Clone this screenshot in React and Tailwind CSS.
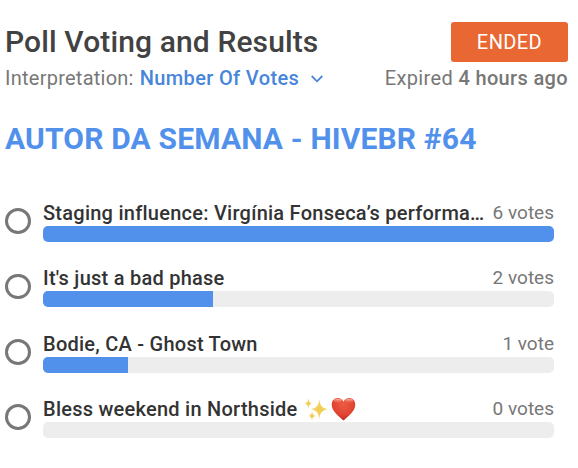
const options = [
  { label: "Staging influence: Virgínia Fonseca’s performa…", votes: "6 votes", percent: 100 },
  { label: "It's just a bad phase", votes: "2 votes", percent: 33.33 },
  { label: "Bodie, CA - Ghost Town", votes: "1 vote", percent: 16.67 },
  { label: "Bless weekend in Northside", votes: "0 votes", percent: 0, emoji: true },
];

function Sparkles() {
  return (
    <svg width="24" height="24" viewBox="0 0 24 24" className="block">
      <defs>
        <radialGradient id="spark">
          <stop offset="0" stopColor="#f0cb4a" />
          <stop offset="1" stopColor="#f5da80" />
        </radialGradient>
      </defs>
      <g fill="url(#spark)">
        <path d="M15.3 1.6C16 8.6 17.6 10.8 23.8 12.3C17.6 13.8 16 16 15.3 22.8C14.6 16 13 13.8 7 12.3C13 10.8 14.6 8.6 15.3 1.6Z" />
        <path d="M4.4 .8C4.8 4.6 5.5 5.8 8.2 6.6C5.5 7.4 4.8 8.6 4.4 12C4 8.6 3.3 7.4.6 6.6C3.3 5.8 4 4.6 4.4.8Z" />
        <path d="M8 14C8.4 17.1 9.1 18.1 11.6 18.9C9.1 19.7 8.4 20.7 8 24C7.6 20.7 6.9 19.7 4.5 18.9C6.9 18.1 7.6 17.1 8 14Z" />
      </g>
    </svg>
  );
}

function Heart() {
  return (
    <svg width="25" height="24" viewBox="0 0 26 24" preserveAspectRatio="none" className="block">
      <defs>
        <radialGradient id="heart" cx=".5" cy=".3" r=".7">
          <stop offset="0" stopColor="#ef5b43" />
          <stop offset=".65" stopColor="#e04431" />
          <stop offset="1" stopColor="#b92c20" />
        </radialGradient>
        <linearGradient id="shine" x2="0" y2="1">
          <stop offset="0" stopColor="#ffd0c4" stopOpacity=".8" />
          <stop offset="1" stopColor="#ff8b74" stopOpacity="0" />
        </linearGradient>
      </defs>
      <path fill="url(#heart)" d="M13 4.8C11.7 2.2 9.5 1 7 1C3.4 1 .8 3.8.8 7.7C.8 14.5 8.4 19.2 13 23.6C17.6 19.2 25.2 14.5 25.2 7.7C25.2 3.8 22.6 1 19 1C16.5 1 14.3 2.2 13 4.8Z" />
      <ellipse cx="7" cy="4" rx="4" ry="2.2" fill="url(#shine)" />
      <ellipse cx="19" cy="4" rx="4" ry="2.2" fill="url(#shine)" />
    </svg>
  );
}

function Option({ label, votes, percent, emoji }) {
  return (
    <li className="flex h-[42px] items-center gap-[12.5px]">
      <span className="size-[25.5px] shrink-0 rounded-full border-3 border-[#777777]" />
      <div className="w-[511px]">
        <div className="flex h-[26px] justify-between whitespace-nowrap leading-[26px]">
          <span className="flex items-center font-medium tracking-[0.25px] text-[#333333]">
            {label}
            {emoji && (
              <span className="ml-1.5 flex gap-[3px]">
                <Sparkles />
                <Heart />
              </span>
            )}
          </span>
          <span className="text-[19px] text-[#777777]">{votes}</span>
        </div>
        <div className="h-4 overflow-hidden rounded-[5px] bg-[#ededed]">
          <div className="h-full bg-[#5191ec]" style={{ width: `${percent}%` }} />
        </div>
      </div>
    </li>
  );
}

export default function App() {
  return (
    <main className="h-[468px] w-[578px] overflow-hidden bg-white pl-[5px] pr-[10px] pt-[22px] font-['Roboto',sans-serif] text-[20px]">
      <header className="flex h-10 justify-between">
        <h1 className="whitespace-nowrap text-[30px] font-medium leading-10 tracking-[0.12px] text-[#424242]">Poll Voting and Results</h1>
        <span className="flex h-10 w-[117px] items-center justify-center rounded-[3px] bg-[#e96732] tracking-[0.4px] text-white">ENDED</span>
      </header>
      <div className="flex h-8 justify-between whitespace-nowrap leading-8 text-[#777777]">
        <p className="flex items-center tracking-[0.25px]">
          Interpretation:
          <span className="ml-1.5 font-medium tracking-[0.36px] text-[#4786da]">Number Of Votes</span>
          <svg width="12" height="8" viewBox="0 0 12 8" className="ml-3 mt-0.5" fill="none" stroke="#4786da" strokeWidth="1.8">
            <path d="M.7 1L6 6.3L11.3 1" />
          </svg>
        </p>
        <p className="tracking-[0.35px]">Expired <span className="font-medium">4 hours ago</span></p>
      </div>
      <h2 className="mt-[25px] whitespace-nowrap text-[30px] font-bold leading-10 tracking-[0.17px] text-[#5191ec]">AUTOR DA SEMANA - HIVEBR #64</h2>
      <ul className="mt-[41px] flex flex-col gap-[23.4px]">
        {options.map((option) => (
          <Option key={option.label} {...option} />
        ))}
      </ul>
    </main>
  );
}
